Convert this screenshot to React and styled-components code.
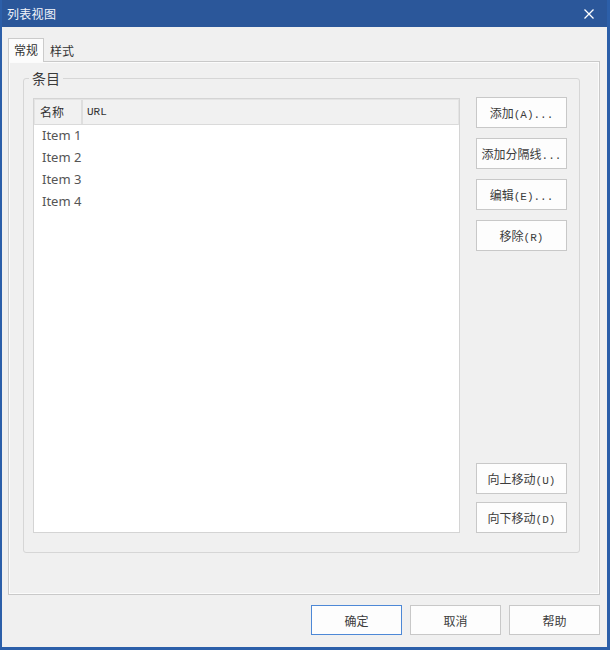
import React from "react";
import styled, { createGlobalStyle } from "styled-components";

const GlobalStyle = createGlobalStyle`
  html, body {
    margin: 0;
    padding: 0;
    background: #f0f0f0;
  }
  #root {
    width: 610px;
    height: 650px;
  }
  *, *::before, *::after {
    box-sizing: border-box;
  }
`;

const CJK = `"Noto Sans CJK SC", "Noto Sans", sans-serif`;
const MONO = `"Liberation Mono", "Noto Sans CJK SC", monospace`;

const Window = styled.div`
  width: 610px;
  height: 650px;
  display: flex;
  flex-direction: column;
  background: #f0f0f0;
  border: solid #2c5fa9;
  border-width: 0 3px 3px 2px;
  font-family: ${CJK};
  color: #333;
`;

const TitleBar = styled.div`
  height: 27px;
  flex: none;
  display: flex;
  align-items: center;
  justify-content: space-between;
  padding: 0 13px 0 5px;
  background: #2b579a;
  color: #f2f5fa;
`;

const Title = styled.span`
  font-size: 12px;
  line-height: 14px;
  letter-spacing: 0.3px;
`;

const CloseGlyph = styled.svg`
  width: 10px;
  height: 10px;
  display: block;
`;

const Body = styled.div`
  flex: 1;
  display: flex;
  flex-direction: column;
  padding: 11px 7px 12px 6px;
  min-height: 0;
`;

const TabStrip = styled.div`
  display: flex;
  align-items: flex-end;
  height: 24px;
  margin-bottom: -1px;
  position: relative;
  z-index: 1;
`;

const Tab = styled.div`
  height: ${(p) => (p.$active ? "24px" : "22px")};
  padding: 0 5px;
  font-size: 12px;
  line-height: ${(p) => (p.$active ? "22px" : "20px")};
  color: #333;
  background: ${(p) => (p.$active ? "#fcfcfc" : "transparent")};
  border: 1px solid ${(p) => (p.$active ? "#cbcbcb" : "transparent")};
  border-bottom: none;
`;

const TabPage = styled.div`
  flex: 1;
  display: flex;
  flex-direction: column;
  padding: 8px 19px 0 14px;
  border: 1px solid #c9c9c9;
  box-shadow: inset 0 0 0 1px #fbfbfb;
  background: #f0f0f0;
`;

const GroupBox = styled.fieldset`
  margin: 0;
  min-width: 0;
  padding: 12px 12px 19px 9px;
  border: 1px solid #d6d6d6;
  border-radius: 3px;
`;

const GroupTitle = styled.legend`
  margin-left: -4px;
  padding: 0 3px;
  font-size: 14px;
  line-height: 16px;
  color: #3a3a3a;
`;

const GroupContent = styled.div`
  display: flex;
  gap: 16px;
`;

const ListView = styled.div`
  flex: 1;
  height: 435px;
  display: flex;
  flex-direction: column;
  background: #fff;
  border: 1px solid #d4d4d4;
`;

const ListHeader = styled.div`
  display: flex;
  height: 26px;
  flex: none;
  background: #f1f1f1;
  border: 1px solid #e4e4e4;
  border-bottom-color: #dadada;
`;

const HeaderCell = styled.div`
  width: ${(p) => p.$width || "auto"};
  flex: ${(p) => (p.$width ? "none" : "1")};
  padding-left: ${(p) => (p.$mono ? "4px" : "5px")};
  border-right: ${(p) => (p.$width ? "2px solid #dedede" : "none")};
  font-family: ${(p) => (p.$mono ? MONO : CJK)};
  font-size: ${(p) => (p.$mono ? "11px" : "12px")};
  line-height: 24px;
  color: #333;
`;

const ListItem = styled.div`
  height: 22px;
  padding-left: 8px;
  font-family: "Noto Sans", "Open Sans", sans-serif;
  font-size: 13px;
  line-height: 20px;
  color: #555;
`;

const ButtonColumn = styled.div`
  width: 91px;
  flex: none;
  display: flex;
  flex-direction: column;
  justify-content: space-between;
  margin-top: -1px;
`;

const ButtonGroup = styled.div`
  display: flex;
  flex-direction: column;
  gap: ${(p) => p.$gap}px;
`;

const Button = styled.button`
  width: 91px;
  height: ${(p) => p.$height || 31}px;
  padding: 0;
  margin: 0;
  background: #fdfdfd;
  border: 1px solid ${(p) => (p.$primary ? "#4d88d6" : "#c8c8c8")};
  font-family: ${CJK};
  font-size: 12px;
  color: #3c3c3c;
  white-space: nowrap;
  cursor: default;
`;

const Mnemonic = styled.span`
  font-family: ${MONO};
  font-size: 11px;
`;

const Footer = styled.div`
  display: flex;
  justify-content: flex-end;
  gap: 8px;
  margin-top: 10px;
`;

const items = ["Item 1", "Item 2", "Item 3", "Item 4"];

const Label = ({ text, tail }) => (
  <>
    {text}
    {tail && <Mnemonic>{tail}</Mnemonic>}
  </>
);

export default function App() {
  return (
    <>
      <GlobalStyle />
      <Window>
        <TitleBar>
          <Title>列表视图</Title>
          <CloseGlyph viewBox="0 0 10 10">
            <path d="M0.5 0.5 L9.5 9.5 M9.5 0.5 L0.5 9.5" stroke="#fff" strokeWidth="1.3" />
          </CloseGlyph>
        </TitleBar>
        <Body>
          <TabStrip>
            <Tab $active>常规</Tab>
            <Tab>样式</Tab>
          </TabStrip>
          <TabPage>
            <GroupBox>
              <GroupTitle>条目</GroupTitle>
              <GroupContent>
                <ListView>
                  <ListHeader>
                    <HeaderCell $width="48px">名称</HeaderCell>
                    <HeaderCell $mono>URL</HeaderCell>
                  </ListHeader>
                  {items.map((it) => (
                    <ListItem key={it}>{it}</ListItem>
                  ))}
                </ListView>
                <ButtonColumn>
                  <ButtonGroup $gap={10}>
                    <Button><Label text="添加" tail="(A)..." /></Button>
                    <Button><Label text="添加分隔线" tail="..." /></Button>
                    <Button><Label text="编辑" tail="(E)..." /></Button>
                    <Button><Label text="移除" tail="(R)" /></Button>
                  </ButtonGroup>
                  <ButtonGroup $gap={8}>
                    <Button><Label text="向上移动" tail="(U)" /></Button>
                    <Button><Label text="向下移动" tail="(D)" /></Button>
                  </ButtonGroup>
                </ButtonColumn>
              </GroupContent>
            </GroupBox>
          </TabPage>
          <Footer>
            <Button $primary $height={30}>确定</Button>
            <Button $height={30}>取消</Button>
            <Button $height={30}>帮助</Button>
          </Footer>
        </Body>
      </Window>
    </>
  );
}
